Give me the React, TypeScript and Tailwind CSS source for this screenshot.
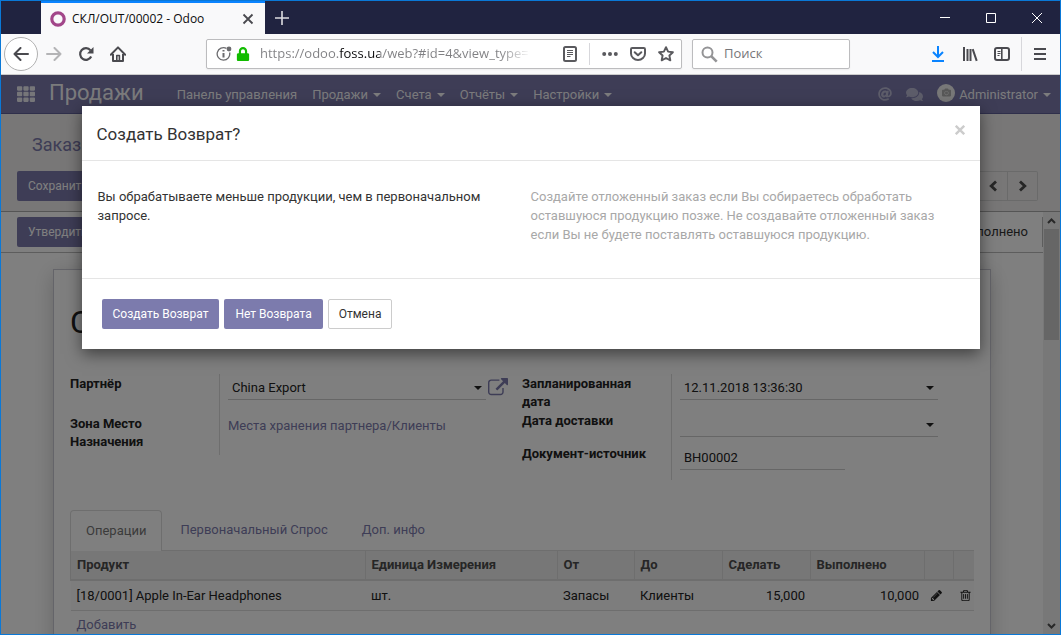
import React from "react";
import { FaAt, FaCamera, FaComments, FaLock, FaTh } from "react-icons/fa";

const menus = [
  { label: "Панель управления", caret: false },
  { label: "Продажи", caret: true },
  { label: "Счета", caret: true },
  { label: "Отчёты", caret: true },
  { label: "Настройки", caret: true },
];

const Caret: React.FC = () => (
  <svg width="8" height="4" viewBox="0 0 8 4" fill="currentColor" aria-hidden="true">
    <path d="M0 0h8L4 4z" />
  </svg>
);

const Chevron: React.FC<{ d: string }> = ({ d }) => (
  <svg width="10" height="12" viewBox="0 0 10 12" fill="none" stroke="currentColor" strokeWidth="2.8" aria-hidden="true">
    <path d={d} />
  </svg>
);

const ExternalLink: React.FC = () => (
  <svg width="20" height="20" viewBox="0 0 1792 1792" fill="currentColor" aria-hidden="true">
    <path d="M1408 928v320q0 119-84.5 203.5t-203.5 84.5h-832q-119 0-203.5-84.5t-84.5-203.5v-832q0-119 84.5-203.5t203.5-84.5h704q14 0 23 9t9 23v64q0 14-9 23t-23 9h-704q-66 0-113 47t-47 113v832q0 66 47 113t113 47h832q66 0 113-47t47-113v-320q0-14 9-23t23-9h64q14 0 23 9t9 23zm384-864v512q0 26-19 45t-45 19-45-19l-176-176-652 652q-10 10-23 10t-23-10l-114-114q-10-10-10-23t10-23l652-652-176-176q-19-19-19-45t19-45 45-19h512q26 0 45 19t19 45z" />
  </svg>
);

const Pencil: React.FC = () => (
  <svg width="13" height="13" viewBox="0 0 1792 1792" fill="currentColor" aria-hidden="true">
    <path d="M491 1536l91-91-235-235-91 91v107h128v128h107zm523-928q0-22-22-22-10 0-17 7l-542 542q-7 7-7 17 0 22 22 22 10 0 17-7l542-542q7-7 7-17zm-54-192l416 416-832 832h-416v-416zm683 96q0 53-37 90l-166 166-416-416 166-165q36-38 90-38 53 0 91 38l235 234q37 39 37 91z" />
  </svg>
);

const Trash: React.FC = () => (
  <svg width="13" height="13" viewBox="0 0 1792 1792" fill="currentColor" aria-hidden="true">
    <path d="M704 736v576q0 14-9 23t-23 9h-64q-14 0-23-9t-9-23v-576q0-14 9-23t23-9h64q14 0 23 9t9 23zm256 0v576q0 14-9 23t-23 9h-64q-14 0-23-9t-9-23v-576q0-14 9-23t23-9h64q14 0 23 9t9 23zm256 0v576q0 14-9 23t-23 9h-64q-14 0-23-9t-9-23v-576q0-14 9-23t23-9h64q14 0 23 9t9 23zm128 724v-948h-896v948q0 22 7 40.5t14.5 27 10.5 8.5h832q3 0 10.5-8.5t14.5-27 7-40.5zm-672-1076h448l-48-117q-7-9-17-11h-317q-10 2-17 11zm928 32v64q0 14-9 23t-23 9h-96v948q0 83-47 143.5t-113 60.5h-832q-66 0-113-58.5t-47-141.5v-952h-96q-14 0-23-9t-9-23v-64q0-14 9-23t23-9h309l70-167q15-37 54-63t79-26h320q40 0 79 26t54 63l70 167h309q14 0 23 9t9 23z" />
  </svg>
);

const TitleBar: React.FC = () => (
  <div className="flex h-[33px] shrink-0 items-stretch bg-[#202340] pl-10 text-white">
    <div className="flex w-56 items-center border-t-2 border-[#0a84ff] bg-[#f9f9fa] pr-2.5 pl-[9px] text-[#0c0c0d]">
      <svg width="16" height="16" viewBox="0 0 16 16" aria-hidden="true">
        <circle cx="8" cy="8" r="6.200" fill="none" stroke="#a24689" strokeWidth="3.2" />
      </svg>
      <span className="ml-1.5 flex-1 truncate text-xs">СКЛ/OUT/00002 - Odoo</span>
      <button aria-label="Закрыть вкладку">
        <svg width="14" height="14" viewBox="0 0 14 14" stroke="#4a4a4f" strokeWidth="1.8">
          <path d="M2.5 2.5l9 9M11.5 2.5l-9 9" />
        </svg>
      </button>
    </div>
    <button aria-label="Новая вкладка" className="ml-2.5">
      <svg width="14" height="14" viewBox="0 0 14 14" stroke="#dcdce0" strokeWidth="1.6">
        <path d="M7 0v14M0 7h14" />
      </svg>
    </button>
    <div className="ml-auto flex items-center gap-9 pr-[18px]">
      <button aria-label="Свернуть">
        <svg width="10" height="10" viewBox="0 0 10 10" stroke="#fff">
          <path d="M0 4.5h10" />
        </svg>
      </button>
      <button aria-label="Развернуть">
        <svg width="10" height="10" viewBox="0 0 10 10" stroke="#fff" fill="none">
          <path d="M.5 .5h9v9h-9z" />
        </svg>
      </button>
      <button aria-label="Закрыть">
        <svg width="10" height="10" viewBox="0 0 10 10" stroke="#fff">
          <path d="M0 0l10 10M10 0L0 10" />
        </svg>
      </button>
    </div>
  </div>
);

const ToolBar: React.FC = () => (
  <div className="flex h-[41px] shrink-0 items-center border-b border-[#ccc] bg-[#f9f9fa] pr-[13px] pl-[3px] text-[#4a4a4f]">
    <button aria-label="Назад" className="flex size-[34px] items-center justify-center rounded-full border border-[#b1b1b1] bg-white">
      <svg width="16" height="14" viewBox="0 0 16 14" fill="none" stroke="currentColor" strokeWidth="2" strokeLinecap="round" strokeLinejoin="round">
        <path d="M15 7H1.5M7.5 1l-6 6 6 6" />
      </svg>
    </button>
    <button aria-label="Вперёд" className="ml-2 text-[#b4b4b6]">
      <svg width="16" height="14" viewBox="0 0 16 14" fill="none" stroke="currentColor" strokeWidth="2" strokeLinecap="round" strokeLinejoin="round">
        <path d="M1 7h13.500M8.500 1l6 6-6 6" />
      </svg>
    </button>
    <button aria-label="Обновить" className="ml-4">
      <svg width="16" height="16" viewBox="0 0 16 16" fill="none" stroke="currentColor" strokeWidth="2.2">
        <path d="M13.200 10.500A5.800 5.800 0 1 1 12.500 4.400" />
        <path d="M15.500 1v6.500H9z" fill="currentColor" stroke="none" />
      </svg>
    </button>
    <button aria-label="Домой" className="ml-4">
      <svg width="16" height="16" viewBox="0 0 16 16" fill="none" stroke="currentColor" strokeWidth="2" strokeLinejoin="round">
        <path d="M.8 8.700L8 1.400l7.200 7.300" strokeLinecap="round" />
        <path d="M3 8v7h10V8" />
        <path d="M6.800 15V9.500h2.600V15" strokeWidth="1.600" />
      </svg>
    </button>
    <div className="ml-20 flex h-[30px] flex-1 items-center rounded-xs border border-[#bcbcbe] bg-white px-[7px] shadow-xs">
      <svg width="17" height="16" viewBox="0 0 17 16" fill="none" stroke="#6b6b6e" aria-hidden="true" className="ml-0.5">
        <path d="M10.500 2.400A6.300 6.300 0 1 0 13.600 6.500" strokeWidth="1.300" />
        <path d="M7.500 7v4.500M7.500 4v1.600" strokeWidth="2" />
        <circle cx="13" cy="3" r="2.400" fill="#6b6b6e" stroke="none" />
      </svg>
      <FaLock size={14} color="#12bc00" className="ml-[3px]" />
      <input
        aria-label="Адрес"
        defaultValue="https://odoo.foss.ua/web?#id=4&view_type=form"
        className="ml-2.5 min-w-0 flex-1 bg-[linear-gradient(to_right,#808083_79px,#0c0c0d_79px,#0c0c0d_120px,#808083_120px,#808083_240px,transparent_270px)] bg-clip-text text-[13px] text-transparent caret-black outline-none"
      />
      <div className="ml-5 flex items-center">
        <svg width="14" height="16" viewBox="0 0 14 16" fill="none" stroke="#5a5a5e" aria-hidden="true">
          <rect x="1" y="1" width="12" height="14" rx="1.500" strokeWidth="2" />
          <path d="M4 4.500h6M4 6.500h6M4 8.500h6M4 10.500h3.500" />
        </svg>
        <span className="mx-3 h-[22px] w-px bg-[#d7d7db]" />
        <svg width="16" height="16" viewBox="0 0 16 16" fill="#5a5a5e" aria-hidden="true">
          <circle cx="2.200" cy="8" r="2" />
          <circle cx="8" cy="8" r="2" />
          <circle cx="13.800" cy="8" r="2" />
        </svg>
        <svg width="16" height="16" viewBox="0 0 16 16" fill="none" stroke="#5a5a5e" strokeWidth="2" aria-hidden="true" className="ml-3">
          <path d="M2.200 2h11.600c.7 0 1.200.5 1.200 1.200V7.500a7 6.500 0 0 1-14 0V3.200C1 2.500 1.500 2 2.200 2z" />
          <path d="M4.700 6.200L8 9.300l3.300-3.100" strokeLinecap="round" strokeLinejoin="round" />
        </svg>
        <svg width="16" height="16" viewBox="0 0 16 16" fill="none" stroke="#5a5a5e" strokeWidth="1.900" strokeLinejoin="round" aria-hidden="true" className="ml-3">
          <path d="M8 1.200l2.100 4.400 4.800.6-3.500 3.300.9 4.800L8 12l-4.300 2.300.9-4.800L1.100 6.200l4.800-.6z" />
        </svg>
      </div>
    </div>
    <div className="ml-2.5 flex h-[30px] w-[158px] items-center rounded-xs border border-[#bcbcbe] bg-white px-2 shadow-xs">
      <svg width="17" height="17" viewBox="0 0 17 17" fill="none" stroke="#949496" aria-hidden="true">
        <circle cx="6.500" cy="6.500" r="5" strokeWidth="2" />
        <path d="M10.200 10.200l5.500 5.500" strokeWidth="2.600" />
      </svg>
      <input aria-label="Поиск" placeholder="Поиск" className="ml-1.5 min-w-0 flex-1 text-[13px] outline-none placeholder:text-[#77777a]" />
    </div>
    <div className="ml-20 flex items-center gap-4">
      <button aria-label="Загрузки">
        <svg width="16" height="16" viewBox="0 0 16 16" fill="none" stroke="#0a84ff" strokeWidth="2">
          <path d="M8 0v10M3 6l5 5 5-5M2 15h12" />
        </svg>
      </button>
      <button aria-label="Библиотека">
        <svg width="16" height="16" viewBox="0 0 16 16" fill="none" stroke="currentColor" strokeWidth="2">
          <path d="M2 1v14M5.500 3v12M8.500 3v12M10.700 3.200l4 11.600" />
        </svg>
      </button>
      <button aria-label="Боковая панель">
        <svg width="16" height="16" viewBox="0 0 16 16" fill="none" stroke="currentColor">
          <rect x="1" y="2" width="14" height="12" rx="2" strokeWidth="2" />
          <path d="M7.800 2v12" strokeWidth="1.600" />
          <path d="M3.500 5.500h3M3.500 7.500h3M3.500 9.500h2" />
        </svg>
      </button>
    </div>
    <span className="mx-[11px] h-[34px] w-px bg-[#d7d7db]" />
    <button aria-label="Меню">
      <svg width="14" height="14" viewBox="0 0 14 14" stroke="currentColor" strokeWidth="2">
        <path d="M1 2h12M1 7h12M1 12h12" />
      </svg>
    </button>
  </div>
);

const NavBar: React.FC = () => (
  <nav className="flex h-[39px] shrink-0 items-center border-b border-[#5f5e97] bg-[#7c7bad] pt-px pr-[9px] pl-4 text-white/95">
    <FaTh size={18} className="mb-0.5 opacity-90" />
    <a href="#" className="ml-3.5 pb-1 text-[22px] leading-7">Продажи</a>
    <ul className="ml-[33px] flex items-center gap-[15px]">
      {menus.map((m) => (
        <li key={m.label}>
          <a href="#" className="flex items-center gap-[5px]">
            {m.label}
            {m.caret && <Caret />}
          </a>
        </li>
      ))}
    </ul>
    <div className="ml-auto flex items-center">
      <FaAt size={14} className="mb-0.5 opacity-50" />
      <FaComments size={17} className="ml-3.5 opacity-50" />
      <span className="mb-1 ml-3.5 flex size-[18px] items-center justify-center rounded-full bg-[#f0f0f0] text-[#b0b0b0]">
        <FaCamera size={9} />
      </span>
      <a href="#" className="ml-1 flex items-center gap-[5px]">
        Administrator
        <Caret />
      </a>
    </div>
  </nav>
);

const ControlPanel: React.FC = () => (
  <div className="h-[98px] shrink-0 border-b border-[#aaa] bg-[#f0eeee] pr-[22px] pl-4">
    <div className="pt-[19px] pl-[15px] text-lg leading-6 text-[#7c7bad]">
      <a href="#">Заказы</a>
    </div>
    <div className="mt-3.5 flex items-center justify-between">
      <button className="h-[30px] rounded-xs bg-[#7c7bad] px-[11px] text-xs text-white">Сохранить</button>
      <div className="flex">
        <button aria-label="Предыдущий" className="flex h-[30px] w-[30px] items-center justify-center border border-[#d5d5d5] text-[#4c4c4c]">
          <Chevron d="M8 1.500L3.200 6 8 10.500" />
        </button>
        <button aria-label="Следующий" className="flex h-[30px] w-[30px] items-center justify-center rounded-r-xs border border-l-0 border-[#d5d5d5] text-[#4c4c4c]">
          <Chevron d="M2 1.500L6.800 6 2 10.500" />
        </button>
      </div>
    </div>
  </div>
);

const fieldClass = "block h-[26px] w-full appearance-none border-b border-[#ccc] px-1 pt-0.5 outline-none";
const labelClass = "w-[149px] shrink-0 py-px pr-4 font-bold leading-[18px]";

const FormGroups: React.FC = () => (
  <div className="grid grid-cols-2 items-start">
    <div>
      <div className="flex h-10">
        <label htmlFor="partner" className={labelClass}>Партнёр</label>
        <div className="flex flex-1 border-l border-[#ddd] pl-2">
          <div className="relative flex-1">
            <select id="partner" className={fieldClass}>
              <option>China Export</option>
            </select>
            <span className="pointer-events-none absolute top-3 right-1"><Caret /></span>
          </div>
          <button aria-label="Открыть партнёра" className="mr-3.5 ml-0.5 flex h-7 items-center text-[#7c7bad]">
            <ExternalLink />
          </button>
        </div>
      </div>
      <div className="flex">
        <span className={labelClass}>Зона Место Назначения</span>
        <div className="flex-1 border-l border-[#ddd] pt-[3px] pb-5 pl-2">
          <a href="#" className="block leading-[18px] text-[#7c7bad]">Места хранения партнера/Клиенты</a>
        </div>
      </div>
    </div>
    <div className="pr-9">
      <div className="flex h-[37px]">
        <label htmlFor="planned" className={labelClass}>Запланированная дата</label>
        <div className="relative flex-1 border-l border-[#ddd] pl-2">
          <input id="planned" defaultValue="12.11.2018 13:36:30" className={fieldClass} />
          <span className="pointer-events-none absolute top-3 right-1"><Caret /></span>
        </div>
      </div>
      <div className="flex h-[33px]">
        <label htmlFor="delivery" className={labelClass}>Дата доставки</label>
        <div className="relative flex-1 border-l border-[#ddd] pl-2">
          <input id="delivery" className={fieldClass} />
          <span className="pointer-events-none absolute top-3 right-1"><Caret /></span>
        </div>
      </div>
      <div className="flex h-9">
        <label htmlFor="source" className={labelClass}>Документ-источник</label>
        <div className="flex-1 border-l border-[#ddd] pr-[93px] pl-2">
          <input id="source" defaultValue="ВН00002" className={fieldClass} />
        </div>
      </div>
    </div>
  </div>
);

const Operations: React.FC = () => (
  <div className="mt-[30px]">
    <div role="tablist" className="flex h-[41px] border-b border-[#ddd] text-[#7c7bad]">
      <button role="tab" aria-selected="true" className="-mb-px rounded-t-sm border border-b-0 border-[#ddd] bg-white px-[15px] text-[#777]">Операции</button>
      <button role="tab" aria-selected="false" className="ml-[3px] px-[15px]">Первоначальный Спрос</button>
      <button role="tab" aria-selected="false" className="ml-1 px-[15px]">Доп. инфо</button>
    </div>
    <table className="w-full table-fixed border-collapse text-left">
      <colgroup>
        <col />
        <col className="w-[192px]" />
        <col className="w-[77px]" />
        <col className="w-[88px]" />
        <col className="w-[88px]" />
        <col className="w-[114px]" />
        <col className="w-[29px]" />
        <col className="w-[21px]" />
      </colgroup>
      <thead>
        <tr className="h-[29px] border-b-2 border-[#ddd] bg-[#eee] text-[#4c4c4c] *:border-l *:border-[#ddd] *:pr-1 *:pl-[6px]">
          <th>Продукт</th>
          <th>Единица Измерения</th>
          <th>От</th>
          <th>До</th>
          <th>Сделать</th>
          <th>Выполнено</th>
          <th />
          <th />
        </tr>
      </thead>
      <tbody>
        <tr className="h-[30px] border-b border-[#ddd] bg-[#fafafa] *:pr-[5px] *:pl-[6px]">
          <td>[18/0001] Apple In-Ear Headphones</td>
          <td>шт.</td>
          <td>Запасы</td>
          <td>Клиенты</td>
          <td className="text-right">15,000</td>
          <td className="text-right">10,000</td>
          <td><button aria-label="Изменить" className="block"><Pencil /></button></td>
          <td><button aria-label="Удалить" className="block"><Trash /></button></td>
        </tr>
        <tr className="h-[29px] *:px-[6px]">
          <td colSpan={8}><a href="#" className="text-[#7c7bad]">Добавить</a></td>
        </tr>
      </tbody>
    </table>
  </div>
);

const ScrollBar: React.FC = () => (
  <div className="flex w-[17px] shrink-0 flex-col items-center bg-[#f0f0f0] text-[#505050]">
    <svg width="17" height="17" viewBox="0 0 17 17" fill="none" stroke="currentColor" strokeWidth="2" className="shrink-0">
      <path d="M5 11l3.500-3.500L12 11" />
    </svg>
    <div className="h-[111px] w-[15px] shrink-0 bg-[#cdcdcd]" />
    <svg width="17" height="17" viewBox="0 0 17 17" fill="none" stroke="currentColor" strokeWidth="2" className="mt-auto shrink-0">
      <path d="M5 7l3.500 3.500L12 7" />
    </svg>
  </div>
);

const ReturnDialog: React.FC = () => (
  <div role="dialog" aria-modal="true" aria-labelledby="dialog-title" className="mx-auto mt-[31px] w-[898px] max-w-full bg-white text-[#333] shadow-[0_5px_15px_rgba(0,0,0,0.5)]">
    <div className="flex items-center justify-between border-b border-[#e5e5e5] px-[15px] pt-4 pb-3.5">
      <h4 id="dialog-title" className="text-[17px] leading-6">Создать Возврат?</h4>
      <button aria-label="Закрыть окно" className="mb-2 text-[#ccc]">
        <svg width="10" height="10" viewBox="0 0 10 10" stroke="currentColor" strokeWidth="2.400">
          <path d="M.8 .8l8.400 8.400M9.200 .8L.8 9.200" />
        </svg>
      </button>
    </div>
    <div className="grid grid-cols-2 px-4 pt-[26px] pb-[34px] leading-[19px]">
      <p className="pr-8">Вы обрабатываете меньше продукции, чем в первоначальном запросе.</p>
      <p className="pr-5 text-[#a8a8a8]">
        Создайте отложенный заказ если Вы собираетесь обработать оставшуюся продукцию позже. Не создавайте отложенный заказ если Вы не будете поставлять оставшуюся продукцию.
      </p>
    </div>
    <div className="flex gap-[5px] border-t border-[#e5e5e5] p-5 text-xs">
      <button className="h-[30px] rounded-xs bg-[#7c7bad] px-[11px] text-white">Создать Возврат</button>
      <button className="h-[30px] rounded-xs bg-[#7c7bad] px-[11px] text-white">Нет Возврата</button>
      <button className="h-[30px] rounded-xs border border-[#ccc] bg-white px-2.5">Отмена</button>
    </div>
  </div>
);

const App: React.FC = () => {
  return (
    <div className="flex h-screen flex-col overflow-hidden border border-[#0a78d7] font-['Open_Sans','Noto_Sans',sans-serif]">
      <TitleBar />
      <ToolBar />
      <div className="relative flex min-h-0 flex-1 flex-col overflow-hidden bg-white font-['Roboto',sans-serif] text-[13px] text-[#222]">
        <NavBar />
        <ControlPanel />
        <div className="flex min-h-0 flex-1">
          <div className="min-w-0 flex-1 overflow-hidden">
            <div className="flex items-center justify-between border-b border-[#bbb] py-[5px] pl-4">
              <button className="h-[30px] rounded-xs bg-[#7c7bad] px-[11px] text-xs text-white">Утвердить</button>
              <span className="flex h-[30px] items-center border-r border-[#bbb] pr-3.5 text-[#333]">Выполнено</span>
            </div>
            <div className="mx-[52px] mt-4 border border-[#c8c8d3] bg-white px-4 pb-10 shadow-[0_5px_20px_rgba(0,0,0,0.2)]">
              <h1 className="pt-8 pb-[32px] text-[32px] leading-10">СКЛ/OUT/00002</h1>
              <FormGroups />
              <Operations />
            </div>
          </div>
          <ScrollBar />
        </div>
        <div className="absolute inset-0 bg-black/50">
          <ReturnDialog />
        </div>
      </div>
    </div>
  );
};

export default App;
